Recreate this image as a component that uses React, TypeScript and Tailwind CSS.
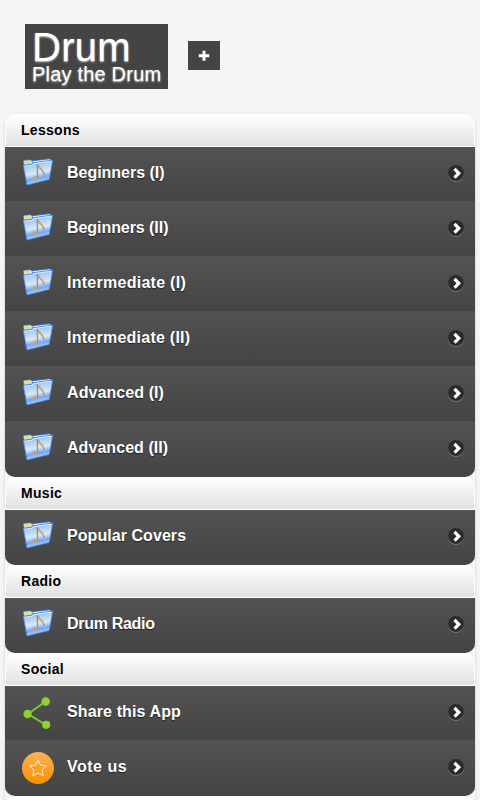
import { Fragment } from "react";

type IconName = "folder" | "share" | "star";

interface Item {
  label: string;
  icon: IconName;
  tracking?: string;
}

interface Section {
  title: string;
  items: Item[];
}

const sections: Section[] = [
  {
    title: "Lessons",
    items: [
      { label: "Beginners (I)", icon: "folder", tracking: "tracking-[-0.02px]" },
      { label: "Beginners (II)", icon: "folder", tracking: "tracking-[-0.06px]" },
      { label: "Intermediate (I)", icon: "folder", tracking: "tracking-[0.27px]" },
      { label: "Intermediate (II)", icon: "folder", tracking: "tracking-[0.25px]" },
      { label: "Advanced (I)", icon: "folder", tracking: "tracking-[0.08px]" },
      { label: "Advanced (II)", icon: "folder", tracking: "tracking-[0.06px]" },
    ],
  },
  {
    title: "Music",
    items: [{ label: "Popular Covers", icon: "folder", tracking: "tracking-[0.06px]" }],
  },
  {
    title: "Radio",
    items: [{ label: "Drum Radio", icon: "folder", tracking: "tracking-[-0.3px]" }],
  },
  {
    title: "Social",
    items: [
      { label: "Share this App", icon: "share", tracking: "tracking-[0.12px]" },
      { label: "Vote us", icon: "star", tracking: "tracking-[0.5px]" },
    ],
  },
];

const FolderIcon = () => (
  <svg viewBox="0 0 32 32" className="h-8 w-8">
    <defs>
      <linearGradient id="folderFront" x1="0" y1="0" x2="0.25" y2="1">
        <stop offset="0" stopColor="#5d9aec" />
        <stop offset="0.3" stopColor="#a9cdf8" />
        <stop offset="0.6" stopColor="#dbe8f6" />
        <stop offset="0.8" stopColor="#74a9f2" />
        <stop offset="1" stopColor="#b4d4fb" />
      </linearGradient>
    </defs>
    <path d="M1 5.5l1-1.5 6-.8 1.5 1.3 18.5-2.2 1 1.2-3 19-22 6z" fill="#3c78d0" />
    <path d="M1.5 4.8l7-.9 1.8 1.6-.5 2.8L2.3 9z" fill="#d6dfa9" />
    <path d="M10.5 5.2l17.5-2 .3 1.6-17.5 2z" fill="#eaf4ff" />
    <path
      d="M1.2 9.3l8.5-1 1.2-1.6L30.8 4 27.3 23.5 5 29z"
      fill="url(#folderFront)"
      stroke="#3f80e2"
      strokeWidth="0.8"
      strokeLinejoin="round"
    />
    <path d="M2.5 10.2l7.7-1 1-1.5L29.3 5.2" fill="none" stroke="#e4f1ff" strokeWidth="0.8" />
    <ellipse cx="13.2" cy="22" rx="2.6" ry="1.9" fill="#c7a767" />
    <path d="M15.6 22L15.2 8.2c1.4 4.2 7.2 5.6 6.6 10.6" fill="none" stroke="#a98e62" strokeWidth="1.3" />
    <path d="M16 10.8c2.2 1.4 5 3.2 5.4 6" fill="none" stroke="#d0ac66" strokeWidth="1.4" />
  </svg>
);

const ShareIcon = () => (
  <svg viewBox="0 0 32 32" className="h-8 w-8">
    <path d="M23.5 4.5L6 17l18 11" fill="none" stroke="#83c52c" strokeWidth="2" />
    <g fill="#8ed328">
      <circle cx="23.7" cy="4.5" r="4.2" />
      <circle cx="5.6" cy="17" r="4.2" />
      <circle cx="24.2" cy="27.8" r="4.1" />
    </g>
  </svg>
);

const StarIcon = () => (
  <svg viewBox="0 0 32 32" className="h-8 w-8">
    <defs>
      <linearGradient id="starDisc" x1="0" y1="0" x2="0" y2="1">
        <stop offset="0" stopColor="#fbb158" />
        <stop offset="1" stopColor="#f69000" />
      </linearGradient>
    </defs>
    <circle cx="16" cy="16" r="16" fill="url(#starDisc)" />
    <path
      d="M16 7.8l2.5 5.3 5.9.7-4.3 4.1 1.1 5.9-5.2-2.9-5.2 2.9 1.1-5.9-4.3-4.1 5.9-.7z"
      fill="none"
      stroke="#fff0c9"
      strokeWidth="1"
      strokeLinejoin="round"
    />
  </svg>
);

const icons: Record<IconName, React.FC> = {
  folder: FolderIcon,
  share: ShareIcon,
  star: StarIcon,
};

const Arrow = () => (
  <svg viewBox="0 0 18 18" className="-mt-0.5 h-[18px] w-[18px]">
    <circle cx="9" cy="9.8" r="8" fill="#858585" />
    <circle cx="9" cy="9" r="8" fill="#2b2b2b" />
    <path d="M7.5 4.9l4.3 4.4-4.3 4.4" fill="none" stroke="#fff" strokeWidth="3.2" />
  </svg>
);

const SectionTitle = ({ title }: { title: string }) => (
  <h2 className="h-[33px] rounded-t-[10px] border border-white bg-linear-to-b from-white to-[#e1e1e1] pl-[15px] text-sm leading-[31px] font-bold tracking-[0.3px] text-black">
    {title}
  </h2>
);

const Row = ({ item, last }: { item: Item; last: boolean }) => {
  const Icon = icons[item.icon];
  return (
    <li
      className={`flex h-[55px] items-center border-b bg-linear-to-b from-[#535353] to-[#444] pr-2.5 pl-[17px] ${
        last ? "rounded-b-[10px] border-[#444]" : "border-[#525252]"
      }`}
    >
      <span className={item.icon === "folder" ? "-mt-1" : "-mt-px"}>
        <Icon />
      </span>
      <span
        className={`-mt-[3px] ml-[13px] flex-1 text-base leading-5 font-bold text-white [text-shadow:0_1px_1px_#222] ${item.tracking ?? ""}`}
      >
        {item.label}
      </span>
      <Arrow />
    </li>
  );
};

const App: React.FC = () => {
  return (
    <div className="h-[800px] overflow-hidden bg-[#f5f5f5] font-['Liberation_Sans',Arial,sans-serif]">
      <header className="flex h-[114px] items-start pt-6 pl-[25px]">
        <div className="h-[65px] w-[143px] bg-[#444] pl-[7px] whitespace-nowrap text-white [text-shadow:0_1px_2px_#ddd]">
          <h1 className="pt-1 text-[40px] leading-[38px] tracking-[0.3px]">Drum</h1>
          <p className="text-[20px] leading-[17px] tracking-[0.2px]">Play the Drum</p>
        </div>
        <button className="mt-[17px] ml-5 flex h-[29px] w-8 items-center justify-center bg-[#444]">
          <svg viewBox="0 0 12 12" className="h-3 w-3">
            <path d="M6 .8v10M.8 5.8h10.4" stroke="#fff" strokeWidth="3" />
          </svg>
        </button>
      </header>

      <main className="mx-[5px] rounded-[10px] shadow-[0_1px_3px_#ccc]">
        {sections.map((section) => (
          <Fragment key={section.title}>
            <SectionTitle title={section.title} />
            <ul>
              {section.items.map((item, i) => (
                <Row key={item.label} item={item} last={i === section.items.length - 1} />
              ))}
            </ul>
          </Fragment>
        ))}
        {/* Top edge of the section below the fold */}
        <div className="h-[33px] rounded-t-[10px] bg-white" />
      </main>
    </div>
  );
};

export default App;
